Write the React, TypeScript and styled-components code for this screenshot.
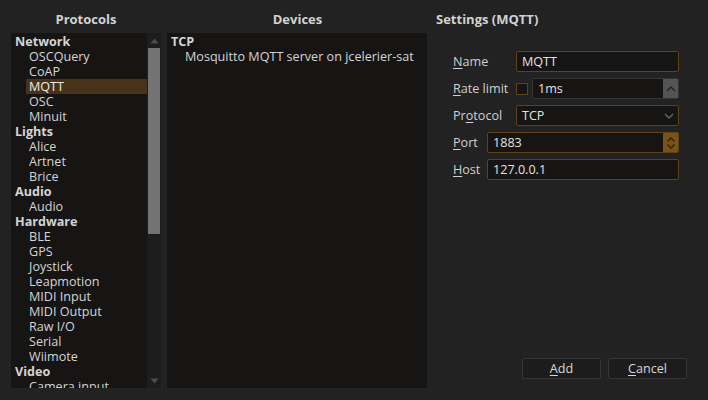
import React from "react";
import styled, { createGlobalStyle } from "styled-components";

const Global = createGlobalStyle`
  html, body { margin: 0; padding: 0; background: #222222; }
  body { font-family: "Open Sans", "DejaVu Sans", sans-serif; font-size: 12.6px; color: #d4d4d4; }
  * { box-sizing: border-box; }
`;

const Page = styled.div`
  width: 708px;
  height: 400px;
  background: #222222;
  display: grid;
  grid-template-columns: 150px 261px 1fr;
  grid-template-rows: 33px 355px;
  column-gap: 6px;
  padding-left: 11px;
  overflow: hidden;
`;

const Header = styled.div<{ $align?: string }>`
  display: flex;
  align-items: center;
  justify-content: ${(p) => p.$align || "center"};
  font-weight: 700;
  font-size: 13px;
  color: #d2d2d2;
  padding-top: 4px;
  padding-left: ${(p) => (p.$align ? "2px" : "0")};
`;

const ListBox = styled.div`
  background: #161514;
  display: flex;
  overflow: hidden;
`;

const ListInner = styled.div`
  flex: 1;
  padding-top: 1px;
  overflow: hidden;
`;

const Row = styled.div<{ $cat?: boolean; $sel?: boolean }>`
  height: 15px;
  line-height: 15px;
  white-space: nowrap;
  font-weight: ${(p) => (p.$cat ? 700 : 400)};
  margin-left: ${(p) => (p.$cat ? "0" : "15px")};
  padding-left: ${(p) => (p.$cat ? "4px" : "3px")};
  background: ${(p) => (p.$sel ? "#48331a" : "transparent")};
  color: ${(p) => (p.$sel ? "#ececec" : "#d4d4d4")};
`;

const Scrollbar = styled.div`
  width: 14px;
  background: #1d1d1d;
  display: flex;
  flex-direction: column;
`;

const ScrollBtn = styled.div`
  height: 15px;
  display: flex;
  align-items: center;
  justify-content: center;
`;

const ScrollTrack = styled.div`
  flex: 1;
  padding: 0 1px;
`;

const Thumb = styled.div`
  height: 186px;
  background: #737373;
`;

const DevicesBox = styled(ListBox)`
  margin-right: 1px;
  flex-direction: column;
  padding-top: 1px;
`;

const Settings = styled.div`
  display: flex;
  flex-direction: column;
  padding-left: 1px;
`;

const Form = styled.div`
  display: grid;
  grid-template-columns: 63px 1fr;
  padding: 18px 29px 0 18px;
  row-gap: 6px;
`;

const FieldRow = styled.div`
  display: contents;
`;

const Label = styled.div`
  height: 21px;
  line-height: 21px;
  color: #d0d0d0;
  white-space: nowrap;
  u { text-decoration: underline; text-underline-offset: 2px; }
`;

const Input = styled.div<{ $border?: string }>`
  height: 21px;
  border: 1px solid ${(p) => p.$border || "#5e4319"};
  background: #161514;
  border-radius: 2px;
  display: flex;
  align-items: center;
  padding-left: 5px;
  color: #e2e2e2;
  overflow: hidden;
`;

const SpinInput = styled(Input)`
  flex: 1;
  padding-right: 0;
`;

const Fill = styled.div`
  flex: 1;
`;

const SpinSide = styled.div<{ $bg: string }>`
  width: 15px;
  height: 100%;
  background: ${(p) => p.$bg};
  display: flex;
  align-items: center;
  justify-content: center;
`;

const Combo = styled(Input)`
  padding-right: 4px;
`;

const InlineRow = styled.div`
  display: flex;
  align-items: center;
  gap: 4px;
`;

const Check = styled.div`
  width: 12px;
  height: 12px;
  border: 1px solid #5e4319;
  background: #161514;
  flex: none;
`;

const WideRow = styled.div`
  display: grid;
  grid-template-columns: 34px 1fr;
  grid-column: 1 / span 2;
`;

const Spacer = styled.div`
  flex: 1;
`;

const Buttons = styled.div`
  display: flex;
  justify-content: flex-end;
  gap: 7px;
  padding-right: 21px;
  padding-bottom: 9px;
`;

const Button = styled.div`
  width: 79px;
  height: 21px;
  border: 1px solid #363636;
  border-radius: 2px;
  background: #1c1c1c;
  display: flex;
  align-items: center;
  justify-content: center;
  color: #d8d8d8;
  u { text-decoration: underline; text-underline-offset: 2px; }
`;

const Tri = ({ up }: { up?: boolean }) => (
  <svg width="9" height="6" viewBox="0 0 9 6">
    <polygon points={up ? "4.5,0.5 8.5,5.5 0.5,5.5" : "0.5,0.5 8.5,0.5 4.5,5.5"} fill="#4e4e4e" />
  </svg>
);

const Chevron = ({ up, color }: { up?: boolean; color: string }) => (
  <svg width="10" height="6" viewBox="0 0 10 6">
    <polyline points={up ? "1,5 5,1 9,5" : "1,1 5,5 9,1"} fill="none" stroke={color} strokeWidth="1.3" />
  </svg>
);

const UpDown = () => (
  <svg width="10" height="14" viewBox="0 0 10 14">
    <polyline points="1.5,5.5 5,2 8.5,5.5" fill="none" stroke="#2a2012" strokeWidth="1.3" />
    <polyline points="1.5,8.5 5,12 8.5,8.5" fill="none" stroke="#2a2012" strokeWidth="1.3" />
  </svg>
);

type Item = { t: string; cat?: boolean; sel?: boolean };
const items: Item[] = [
  { t: "Network", cat: true },
  { t: "OSCQuery" },
  { t: "CoAP" },
  { t: "MQTT", sel: true },
  { t: "OSC" },
  { t: "Minuit" },
  { t: "Lights", cat: true },
  { t: "Alice" },
  { t: "Artnet" },
  { t: "Brice" },
  { t: "Audio", cat: true },
  { t: "Audio" },
  { t: "Hardware", cat: true },
  { t: "BLE" },
  { t: "GPS" },
  { t: "Joystick" },
  { t: "Leapmotion" },
  { t: "MIDI Input" },
  { t: "MIDI Output" },
  { t: "Raw I/O" },
  { t: "Serial" },
  { t: "Wiimote" },
  { t: "Video", cat: true },
  { t: "Camera input" },
];

export default function App() {
  return (
    <>
      <Global />
      <Page>
        <Header>Protocols</Header>
        <Header>Devices</Header>
        <Header $align="flex-start">Settings (MQTT)</Header>

        <ListBox>
          <ListInner>
            {items.map((it, i) => (
              <Row key={i} $cat={it.cat} $sel={it.sel}>
                {it.t}
              </Row>
            ))}
          </ListInner>
          <Scrollbar>
            <ScrollBtn>
              <Tri up />
            </ScrollBtn>
            <ScrollTrack>
              <Thumb />
            </ScrollTrack>
            <ScrollBtn>
              <Tri />
            </ScrollBtn>
          </Scrollbar>
        </ListBox>

        <DevicesBox>
          <Row $cat>TCP</Row>
          <Row>Mosquitto MQTT server on jcelerier-sat</Row>
        </DevicesBox>

        <Settings>
          <Form>
            <FieldRow>
              <Label>
                <u>N</u>ame
              </Label>
              <Input>MQTT</Input>
            </FieldRow>
            <FieldRow>
              <Label>
                <u>R</u>ate limit
              </Label>
              <InlineRow>
                <Check />
                <SpinInput $border="#353535">
                  1ms
                  <Fill />
                  <SpinSide $bg="#545454">
                    <Chevron up color="#222" />
                  </SpinSide>
                </SpinInput>
              </InlineRow>
            </FieldRow>
            <FieldRow>
              <Label>
                Pr<u>o</u>tocol
              </Label>
              <Combo>
                TCP
                <Fill />
                <Chevron color="#6a6a6a" />
              </Combo>
            </FieldRow>
            <WideRow>
              <Label>
                <u>P</u>ort
              </Label>
              <SpinInput>
                1883
                <Fill />
                <SpinSide $bg="#7a5316">
                  <UpDown />
                </SpinSide>
              </SpinInput>
            </WideRow>
            <WideRow>
              <Label>
                <u>H</u>ost
              </Label>
              <Input>127.0.0.1</Input>
            </WideRow>
          </Form>
          <Spacer />
          <Buttons>
            <Button>
              <span>
                <u>A</u>dd
              </span>
            </Button>
            <Button>
              <span>
                <u>C</u>ancel
              </span>
            </Button>
          </Buttons>
        </Settings>
      </Page>
    </>
  );
}
